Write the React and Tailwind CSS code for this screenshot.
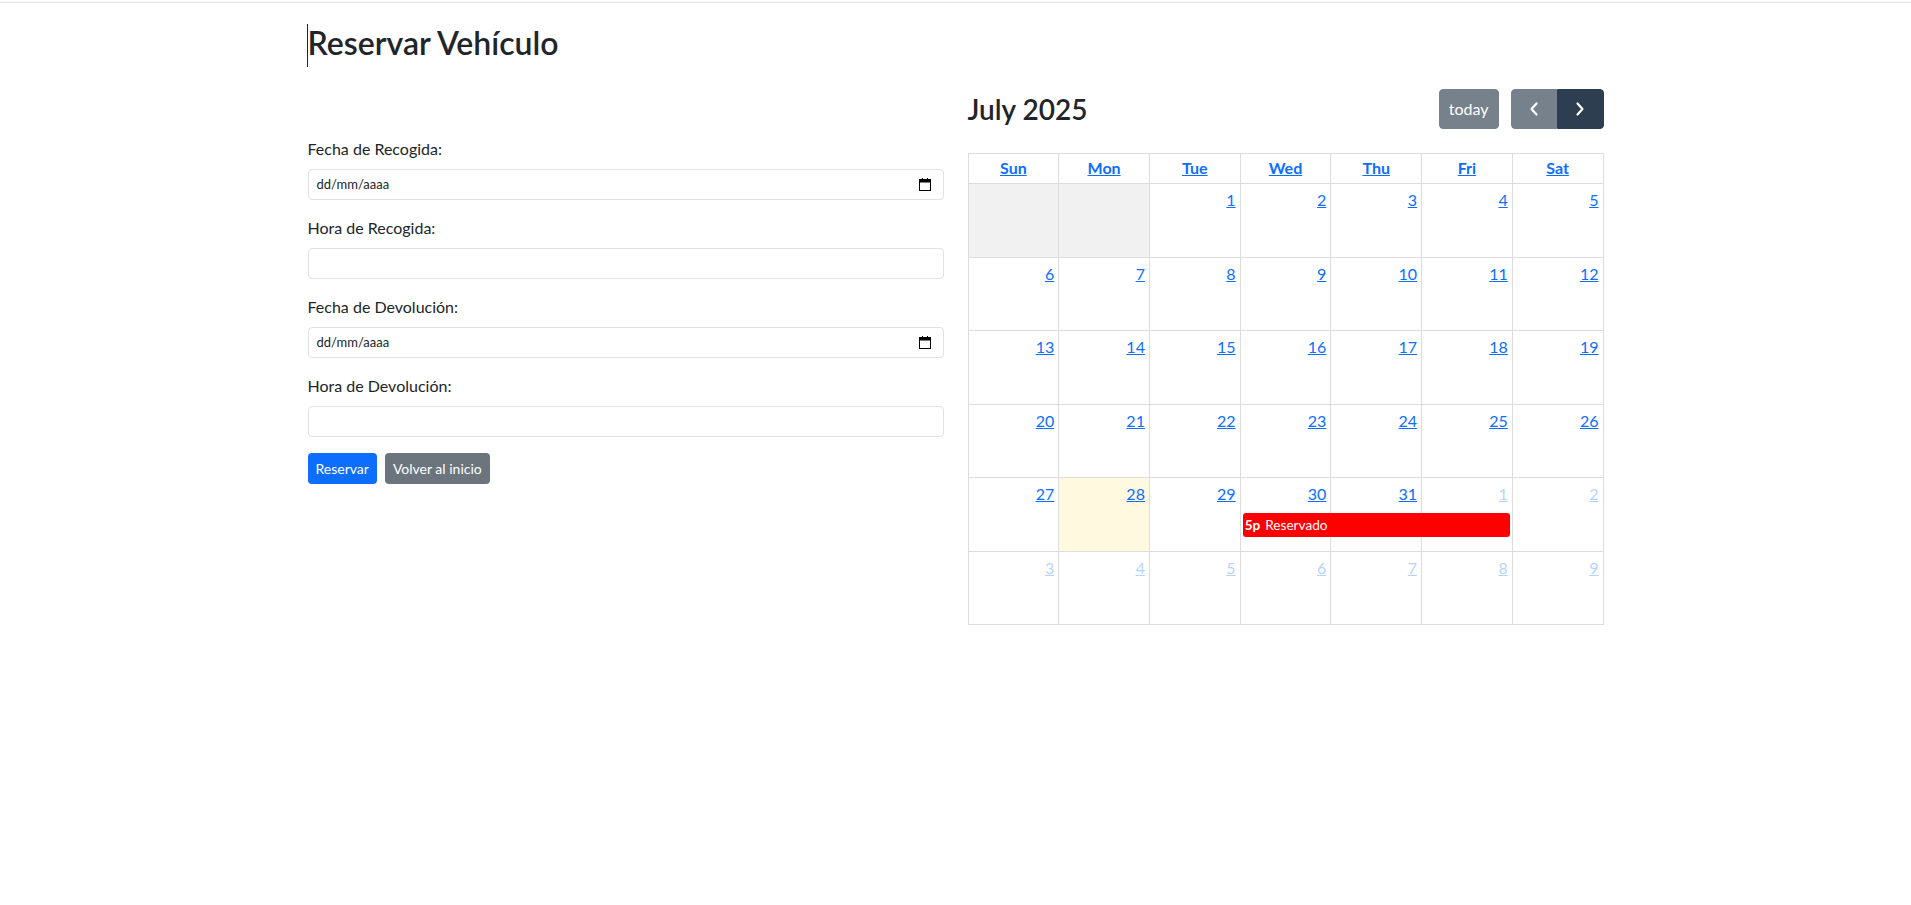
import React from "react";

const days = ["Sun", "Mon", "Tue", "Wed", "Thu", "Fri", "Sat"];
const cols = ["col-start-1", "col-start-2", "col-start-3", "col-start-4", "col-start-5", "col-start-6", "col-start-7"];

// each cell: [label, kind]  kind: "" normal, "off" disabled (no number), "next" next month, "today"
const weeks = [
  [["", "off"], ["", "off"], ["1", ""], ["2", ""], ["3", ""], ["4", ""], ["5", ""]],
  [["6", ""], ["7", ""], ["8", ""], ["9", ""], ["10", ""], ["11", ""], ["12", ""]],
  [["13", ""], ["14", ""], ["15", ""], ["16", ""], ["17", ""], ["18", ""], ["19", ""]],
  [["20", ""], ["21", ""], ["22", ""], ["23", ""], ["24", ""], ["25", ""], ["26", ""]],
  [["27", ""], ["28", "today"], ["29", ""], ["30", ""], ["31", ""], ["1", "next"], ["2", "next"]],
  [["3", "next"], ["4", "next"], ["5", "next"], ["6", "next"], ["7", "next"], ["8", "next"], ["9", "next"]],
];

function CalIcon() {
  return (
    <svg width="12" height="13" viewBox="0 0 12 13" className="text-black">
      <rect x="0.5" y="1.5" width="11" height="11" fill="none" stroke="currentColor" strokeWidth="1" />
      <rect x="0.5" y="1.5" width="11" height="3" fill="currentColor" />
      <rect x="3" y="0" width="1" height="2" fill="currentColor" />
      <rect x="8" y="0" width="1" height="2" fill="currentColor" />
    </svg>
  );
}

function Field({ label, date }) {
  return (
    <div className="mb-4">
      <label className="mb-2 block text-base leading-6 text-[#212529]">{label}</label>
      <div className="flex h-[31px] w-full items-center justify-between rounded-[4px] border border-[#dee2e6] bg-white px-2 text-[13px] text-[#212529]">
        {date ? (
          <>
            <span>dd/mm/aaaa</span>
            <span className="mr-[4px]"><CalIcon /></span>
          </>
        ) : null}
      </div>
    </div>
  );
}

function Chevron({ left }) {
  return (
    <svg width="10" height="16" viewBox="0 0 10 16" fill="none" stroke="white" strokeWidth="2.2" strokeLinecap="round" strokeLinejoin="round">
      {left ? <path d="M7.5 2.5 L2.5 8 L7.5 13.5" /> : <path d="M2.5 2.5 L7.5 8 L2.5 13.5" />}
    </svg>
  );
}

function Calendar() {
  return (
    <div>
      <div className="mb-6 flex h-[40px] items-center justify-between">
        <h2 className="text-[28px] font-semibold leading-[1.2] text-[#212529]">July 2025</h2>
        <div className="flex items-center">
          <button className="h-[40px] rounded-[4px] border border-[#77818c] bg-[#77818c] px-[9px] text-base text-white">today</button>
          <div className="ml-3 flex">
            <button className="flex h-[40px] w-[46px] items-center justify-center rounded-l-[4px] border border-[#77818c] bg-[#77818c]">
              <Chevron left />
            </button>
            <button className="flex h-[40px] w-[47px] items-center justify-center rounded-r-[4px] border border-[#2c3e50] bg-[#2c3e50]">
              <Chevron />
            </button>
          </div>
        </div>
      </div>

      <div className="border-l border-t border-[#ddd]">
        <div className="grid h-[30px] grid-cols-7">
          {days.map((d) => (
            <div key={d} className="border-b border-r border-[#ddd] pt-[2px] text-center text-base font-bold leading-6 text-[#0d6efd] underline">
              {d}
            </div>
          ))}
        </div>
        {weeks.map((week, wi) => (
          <div key={wi} className="grid h-[73.5px] grid-cols-7 grid-rows-1">
            {week.map(([n, kind], ci) => (
              <div
                key={ci}
                className={`${cols[ci]} row-start-1 border-b border-r border-[#ddd] px-1 pt-1 text-right text-base leading-6 ${
                  kind === "off" ? "bg-[#f1f1f1]" : kind === "today" ? "bg-[#fff9df]" : "bg-white"
                }`}
              >
                {n && (
                  <span className={`text-[#0d6efd] underline ${kind === "next" ? "opacity-30" : ""}`}>{n}</span>
                )}
              </div>
            ))}
            {wi === 4 && (
              <div className="col-span-3 col-start-4 row-start-1 mr-[3px] ml-[2px] mt-[35px] flex h-[24px] items-center self-start rounded-[3px] bg-[#ff0000] px-[2px] text-[13.6px] text-white">
                <span className="font-bold">5p</span>
                <span className="ml-[5px]">Reservado</span>
              </div>
            )}
          </div>
        ))}
      </div>
    </div>
  );
}

export default function App() {
  return (
    <div className="min-h-screen bg-white text-[#212529]" style={{ fontFamily: "Lato, 'Noto Sans', sans-serif" }}>
      <div className="h-[3px] border-b border-[#e3e3e3]" />
      <div className="mx-auto w-[1320px] px-3">
        <h2 className="relative mt-[21px] text-[32px] font-semibold leading-[1.2]">
          <span className="absolute left-[-1px] top-0 h-[43px] w-px bg-[#212529]" />
          Reservar Vehículo
        </h2>
        <div className="mt-[27px] flex gap-6">
          <div className="w-[636px] pt-12">
            <Field label="Fecha de Recogida:" date />
            <Field label="Hora de Recogida:" />
            <Field label="Fecha de Devolución:" date />
            <Field label="Hora de Devolución:" />
            <div className="flex gap-2">
              <button className="h-[31px] rounded-[4px] bg-[#0d6efd] px-2 text-sm text-white">Reservar</button>
              <button className="h-[31px] rounded-[4px] bg-[#6c757d] px-2 text-sm text-white">Volver al inicio</button>
            </div>
          </div>
          <div className="w-[636px]">
            <Calendar />
          </div>
        </div>
      </div>
    </div>
  );
}
